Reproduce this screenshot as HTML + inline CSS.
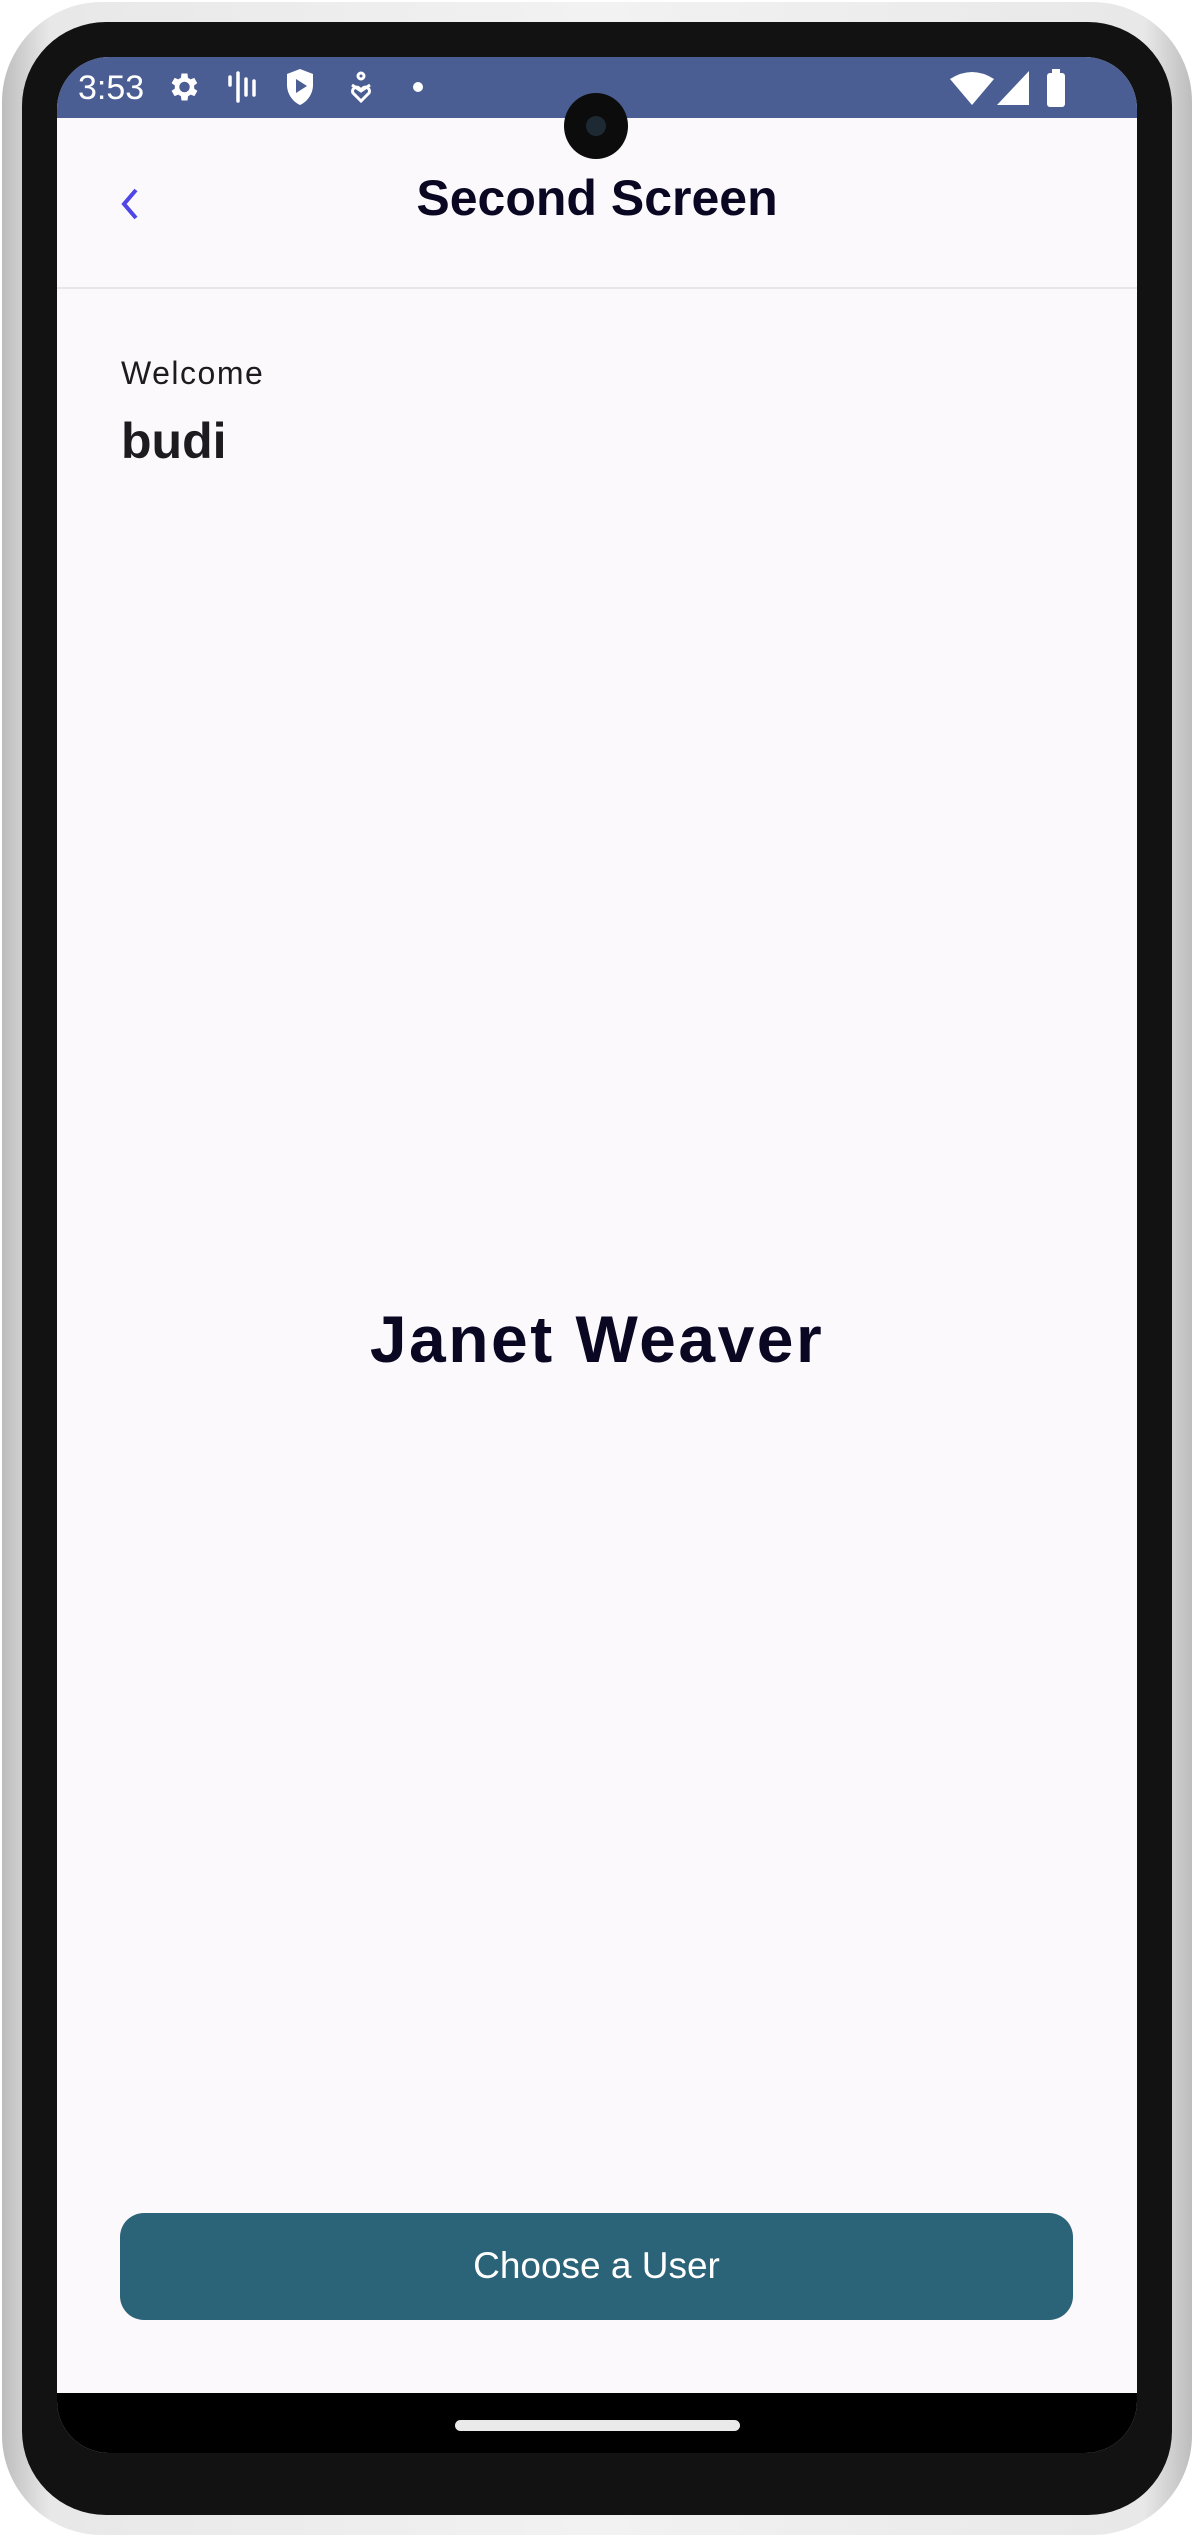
<!DOCTYPE html>
<html><head><meta charset="utf-8"><style>
html,body{margin:0;padding:0;width:1198px;height:2539px;background:#fff;overflow:hidden;font-family:"Liberation Sans",sans-serif}
.outer{position:absolute;left:2px;top:2px;width:1190px;height:2533px;border-radius:100px;background:linear-gradient(90deg,#bdbdbd,#e8e8e8 4%,#f2f2f2 50%,#e8e8e8 96%,#bdbdbd);}
.bezel{position:absolute;left:22px;top:22px;width:1150px;height:2493px;border-radius:84px;background:#121212;}
.screen{position:absolute;left:57px;top:57px;width:1080px;height:2396px;border-radius:52px;overflow:hidden;background:#fbf9fc}
.status{position:absolute;left:0;top:0;width:1080px;height:61px;background:#4a5e93;color:#fff}
.nav{position:absolute;left:0;top:2336px;width:1080px;height:60px;background:#000}
.home{position:absolute;left:398px;top:2363px;width:285px;height:11px;border-radius:6px;background:#eaeaea}
.cam{position:absolute;left:564px;top:93px;width:64px;height:66px;border-radius:50%;background:#0c0c0c}
.cam:after{content:"";position:absolute;left:22px;top:23px;width:20px;height:20px;border-radius:50%;background:#1d2a33}
</style></head><body>
<div class="outer"></div>
<div class="bezel"></div>
<div class="screen">
 <div class="status">
  <div style="position:absolute;left:21px;top:12px;font-size:34px">3:53</div>
  <svg style="position:absolute;left:108px;top:12px" width="36" height="36" viewBox="0 0 24 24"><path fill="#fff" d="M19.4 13a7.5 7.5 0 000-2l2.1-1.6-2-3.5-2.5 1a7 7 0 00-1.7-1L15 3h-4l-.4 2.9a7 7 0 00-1.7 1l-2.5-1-2 3.5L6.6 11a7.5 7.5 0 000 2l-2.2 1.6 2 3.5 2.5-1a7 7 0 001.7 1L11 21h4l.4-2.9a7 7 0 001.7-1l2.5 1 2-3.5zM13 15.5a3.5 3.5 0 110-7 3.5 3.5 0 010 7z"/></svg>
  <svg style="position:absolute;left:170px;top:14px" width="30" height="32" viewBox="0 0 30 32"><g stroke="#fff" stroke-width="3.5" stroke-linecap="round"><path d="M3 6v8M11 2v28M19 8v16M27 10v14"/></g></svg>
  <svg style="position:absolute;left:227px;top:10px" width="32" height="40" viewBox="0 0 32 40"><path fill="#fff" d="M16 2L3 7v11c0 9 6 17 13 20 7-3 13-11 13-20V7z"/><path fill="#4a5e93" d="M12 12v14l11-7z"/></svg>
  <svg style="position:absolute;left:291px;top:14px" width="26" height="32" viewBox="0 0 26 32"><g fill="none" stroke="#fff" stroke-width="3"><circle cx="13" cy="5" r="3"/><path d="M4 14l9 6 9-6M13 30l-8-8a4 4 0 016-5l2 2 2-2a4 4 0 016 5z"/></g></svg>
  <div style="position:absolute;left:356px;top:25px;width:10px;height:10px;border-radius:50%;background:#fff"></div>
  <svg style="position:absolute;left:893px;top:14px" width="44" height="34" viewBox="0 0 44 34"><path fill="#fff" d="M0 8Q22-6 44 8L22 34z"/></svg>
  <svg style="position:absolute;left:940px;top:14px" width="32" height="34" viewBox="0 0 32 34"><path fill="#fff" d="M32 0V34H0z"/></svg>
  <div style="position:absolute;left:990px;top:16px;width:18px;height:34px;background:#fff;border-radius:3px"></div>
  <div style="position:absolute;left:995px;top:12px;width:8px;height:5px;background:#fff"></div>
 </div>
 <svg style="position:absolute;left:61px;top:129px" width="24" height="36" viewBox="0 0 24 36"><path d="M18 4L6 18l12 14" fill="none" stroke="#4f46e5" stroke-width="4"/></svg>
 <div style="position:absolute;left:0;width:1080px;top:112px;text-align:center;font-size:50px;font-weight:bold;color:#0a0723">Second Screen</div>
 <div style="position:absolute;left:0;top:230px;width:1080px;height:2px;background:#e8e6ea"></div>
 <div style="position:absolute;left:64px;top:298px;font-size:32px;color:#1c1b1f;letter-spacing:1.5px">Welcome</div>
 <div style="position:absolute;left:64px;top:355px;font-size:50px;font-weight:bold;color:#1c1b1f">budi</div>
 <div style="position:absolute;left:0;width:1080px;top:1244px;text-align:center;font-size:66px;font-weight:bold;color:#0a0723;letter-spacing:2.5px">Janet Weaver</div>
 <div style="position:absolute;left:63px;top:2156px;width:953px;height:107px;border-radius:24px;background:#2b6378;color:#fff;font-size:37px;text-align:center;line-height:105px">Choose a User</div>
 <div class="nav"></div>
 <div class="home"></div>
</div>
<div class="cam"></div>
</body></html>
